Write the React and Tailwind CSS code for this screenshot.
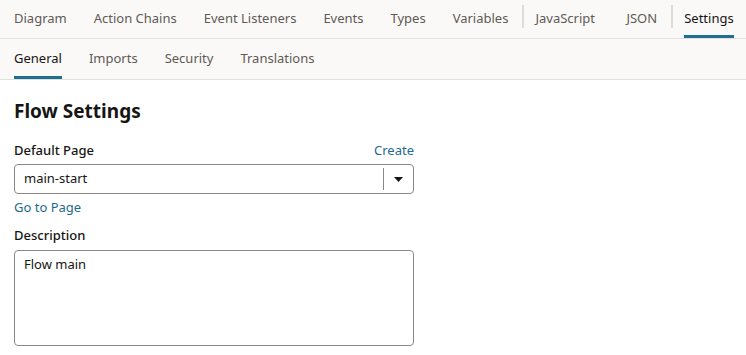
import React from "react";

const topTabs = [
  { label: "Diagram" },
  { label: "Action Chains" },
  { label: "Event Listeners" },
  { label: "Events" },
  { label: "Types" },
  { label: "Variables" },
  { sep: true },
  { label: "JavaScript", cls: "min-w-[64px]" },
  { label: "JSON" },
  { sep: true },
  { label: "Settings", active: true },
];
const subTabs = ["General", "Imports", "Security", "Translations"];

function Tab({ label, active, cls = "" }) {
  return (
    <div className="mx-[13.5px] h-full flex shrink-0">
      <span
        className={
          "h-full flex items-center whitespace-nowrap border-y-[3px] border-t-transparent " +
          cls +
          " " +
          (active ? "border-b-[#1f6f91] text-[#161513]" : "border-b-transparent text-[#5f5a55]")
        }
      >
        {label}
      </span>
    </div>
  );
}

export default function App() {
  return (
    <div
      className="w-[746px] h-[355px] bg-white overflow-hidden text-[13px] text-[#161513]"
      style={{ fontFamily: '"Noto Sans", "Open Sans", sans-serif' }}
    >
      <div className="h-[39px] bg-[#faf9f8] border-b border-[#e2dfdc] flex items-stretch pl-[0.5px]">
        {topTabs.map((t, i) =>
          t.sep ? (
            <div key={i} className="w-[2px] shrink-0 my-[5px] -mr-[2px] h-[23px] bg-[#dedbd8]" />
          ) : (
            <Tab key={i} label={t.label} active={t.active} cls={t.cls} />
          )
        )}
      </div>
      <div className="h-[41px] bg-[#faf9f8] border-b border-[#e2dfdc] flex items-stretch pl-[0.5px]">
        {subTabs.map((t) => (
          <Tab key={t} label={t} active={t === "General"} />
        ))}
      </div>
      <div className="px-[14px] pt-[18px]">
        <h1 className="text-[19px] font-bold leading-[26px] text-[#161513]">Flow Settings</h1>
        <div className="w-[400px] mt-[17px]">
          <div className="flex justify-between items-center h-[20px]">
            <span className="font-medium">Default Page</span>
            <span className="text-[#1f6a8e]">Create</span>
          </div>
          <div className="mt-[3px] h-[30px] border border-[#8c8985] rounded-[4px] flex items-center bg-white">
            <span className="flex-1 pl-[9px]">main-start</span>
            <div className="w-px h-[22px] bg-[#8c8985]" />
            <div className="w-[29px] flex justify-center items-center">
              <svg width="9" height="5" viewBox="0 0 9 5">
                <path d="M0 0 L9 0 L4.5 5 Z" fill="#161513" />
              </svg>
            </div>
          </div>
          <div className="mt-[4px] h-[20px] flex items-center text-[#1f6a8e]">Go to Page</div>
          <div className="mt-[8px] h-[20px] flex items-center font-medium">Description</div>
          <div className="mt-[4px] h-[96px] border border-[#8c8985] rounded-[4px] px-[9px] pt-[4px] bg-white">
            Flow main
          </div>
        </div>
      </div>
    </div>
  );
}
